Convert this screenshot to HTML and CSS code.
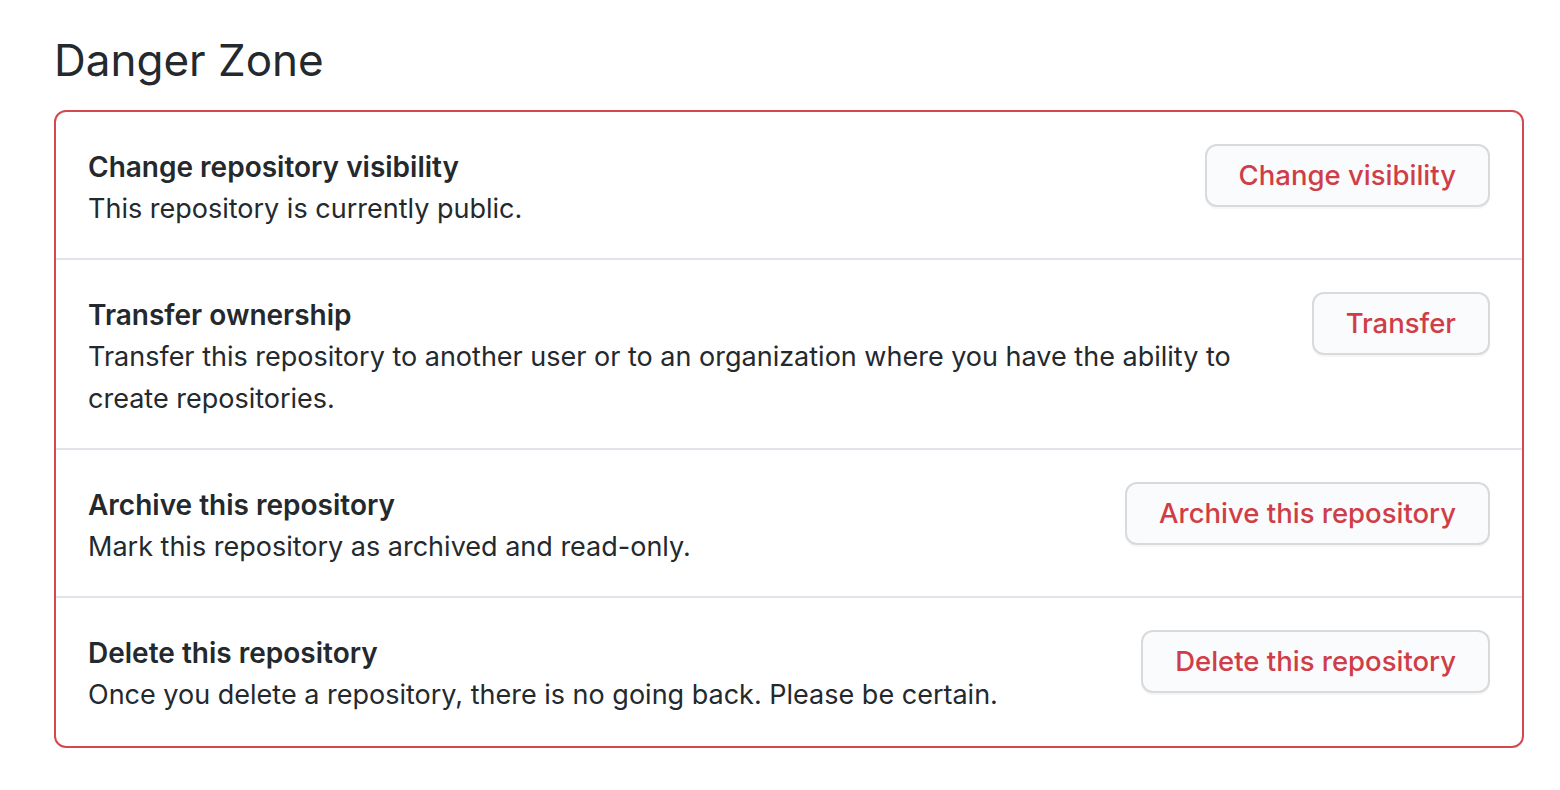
FILE: index.html
```html
<!DOCTYPE html>
<html lang="en">

<head>
  <meta charset="UTF-8" />
  <meta name="viewport" content="width=device-width, initial-scale=1.0" />
  <title>Danger Zone</title>
  <link rel="stylesheet" href="styles.css">
</head>

<body>
  <div class="container">
    <h2 class="subhead">Danger Zone</h2>

    <div class="danger-box">
      <div class="danger-row">
        <div class="danger-text">
          <strong>Change repository visibility</strong>
          <p>This repository is currently public.</p>
        </div>
        <button class="btn-danger">Change visibility</button>
      </div>

      <div class="danger-row">
        <div class="danger-text">
          <strong>Transfer ownership</strong>
          <p>Transfer this repository to another user or to an organization where you have the ability to create repositories.</p>
        </div>
        <button class="btn-danger">Transfer</button>
      </div>

      <div class="danger-row">
        <div class="danger-text">
          <strong>Archive this repository</strong>
          <p>Mark this repository as archived and read-only.</p>
        </div>
        <button class="btn-danger">Archive this repository</button>
      </div>

      <div class="danger-row">
        <div class="danger-text">
          <strong>Delete this repository</strong>
          <p>Once you delete a repository, there is no going back. Please be certain.</p>
        </div>
        <button class="btn-danger">Delete this repository</button>
      </div>
    </div>
  </div>
</body>

</html>
```

FILE: styles.css
```css
:root {
  --text: #24292e;
  --danger: #cf3e48;
  --danger-border: #d4484f;
  --divider: #e1e4e8;
}

body {
  margin: 0;
  font-family: Inter, "Liberation Sans", sans-serif;
  color: var(--text);
  background: #fff;
}

.container {
  padding: 30px 36px 40px 54px;
}

.subhead {
  margin: 0 0 20px;
  font-size: 44px;
  font-weight: 400;
  line-height: 60px;
}

.danger-box {
  border: 2px solid var(--danger-border);
  border-radius: 12px;
}

.danger-row {
  display: flex;
  align-items: flex-start;
  gap: 40px;
  padding: 34px 32px 28px;
}

.danger-row:last-child {
  padding-bottom: 30px;
}

.danger-row + .danger-row {
  border-top: 2px solid var(--divider);
}

.danger-text {
  flex: 1;
  font-size: 27px;
  line-height: 42px;
}

.danger-text strong {
  display: block;
  font-size: 28px;
  font-weight: 600;
}

.danger-text p {
  margin: 0;
}

.btn-danger {
  flex-shrink: 0;
  margin-top: -2px;
  padding: 9px 32px 10px;
  font-family: inherit;
  font-size: 27.5px;
  font-weight: 500;
  line-height: 40px;
  color: var(--danger);
  background: #fafbfc;
  border: 2px solid rgba(27, 31, 35, 0.15);
  border-radius: 12px;
  box-shadow: 0 2px 0 rgba(27, 31, 35, 0.04);
  cursor: pointer;
}
```
